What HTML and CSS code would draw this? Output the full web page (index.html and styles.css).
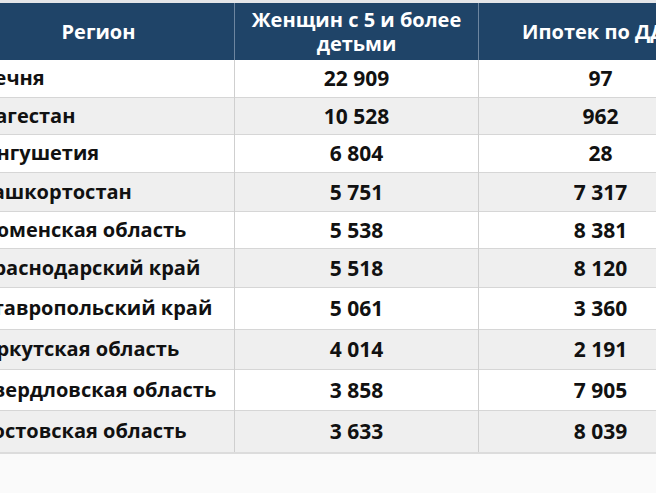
FILE: index.html
```html
<!DOCTYPE html>
<html lang="ru">
<head>
<meta charset="utf-8">
<title>Регионы</title>
<link rel="stylesheet" href="styles.css">
</head>
<body>
<div class="frame">
  <table class="stats">
    <thead>
      <tr>
        <th class="c1">Регион</th>
        <th class="c2">Женщин с 5 и более<br>детьми</th>
        <th class="c3">Ипотек по ДДУ</th>
      </tr>
    </thead>
    <tbody>
      <tr><td class="c1">Чечня</td><td class="c2">22 909</td><td class="c3">97</td></tr>
      <tr><td class="c1">Дагестан</td><td class="c2">10 528</td><td class="c3">962</td></tr>
      <tr><td class="c1">Ингушетия</td><td class="c2">6 804</td><td class="c3">28</td></tr>
      <tr><td class="c1">Башкортостан</td><td class="c2">5 751</td><td class="c3">7 317</td></tr>
      <tr><td class="c1">Тюменская область</td><td class="c2">5 538</td><td class="c3">8 381</td></tr>
      <tr><td class="c1">Краснодарский край</td><td class="c2">5 518</td><td class="c3">8 120</td></tr>
      <tr><td class="c1">Ставропольский край</td><td class="c2">5 061</td><td class="c3">3 360</td></tr>
      <tr><td class="c1">Иркутская область</td><td class="c2">4 014</td><td class="c3">2 191</td></tr>
      <tr><td class="c1">Свердловская область</td><td class="c2">3 858</td><td class="c3">7 905</td></tr>
      <tr><td class="c1">Ростовская область</td><td class="c2">3 633</td><td class="c3">8 039</td></tr>
    </tbody>
  </table>
</div>
</body>
</html>
```

FILE: styles.css
```css
html, body {
  margin: 0;
  padding: 0;
  background: #fafafa;
  overflow: hidden;
}
.frame {
  width: 656px;
  height: 493px;
  overflow: hidden;
  border-top: 3px solid #e4e6e9;
  box-sizing: border-box;
}
.stats {
  margin-left: -37px;
  width: 757px;
  border-collapse: collapse;
  table-layout: fixed;
  font-family: "Open Sans", "Noto Sans", sans-serif;
  font-weight: 700;
  color: #111;
}
.stats .c1 { width: 271px; }
.stats .c2 { width: 243px; }
.stats .c3 { width: 243px; }

.stats thead th {
  height: 57px;
  padding: 0;
  background: #1f4468;
  color: #fff;
  font-size: 20px;
  line-height: 24px;
  text-align: center;
  border-left: 1px solid #6d86a0;
}
.stats thead th:first-child { border-left: none; }

.stats tbody td {
  padding: 0;
  font-size: 21px;
  line-height: 24px;
  text-align: center;
  border-top: 1px solid #d6d6d6;
  border-left: 1px solid #cfcfcf;
  background: #fff;
}
.stats tbody td.c1 {
  font-size: 20px;
  text-align: left;
  padding-left: 17px;
  border-left: none;
}
.stats tbody tr:first-child td { border-top: none; }
.stats tbody tr:nth-child(even) td { background: #efefef; }
.stats tbody tr:last-child td { border-bottom: 2px solid #dcdcdc; }

.stats tbody tr:nth-child(1) { height: 37px; }
.stats tbody tr:nth-child(2) { height: 37px; }
.stats tbody tr:nth-child(3) { height: 38px; }
.stats tbody tr:nth-child(4) { height: 39px; }
.stats tbody tr:nth-child(5) { height: 37px; }
.stats tbody tr:nth-child(6) { height: 39px; }
.stats tbody tr:nth-child(7) { height: 42px; }
.stats tbody tr:nth-child(8) { height: 40px; }
.stats tbody tr:nth-child(9) { height: 41px; }
.stats tbody tr:nth-child(10) { height: 43px; }
```
